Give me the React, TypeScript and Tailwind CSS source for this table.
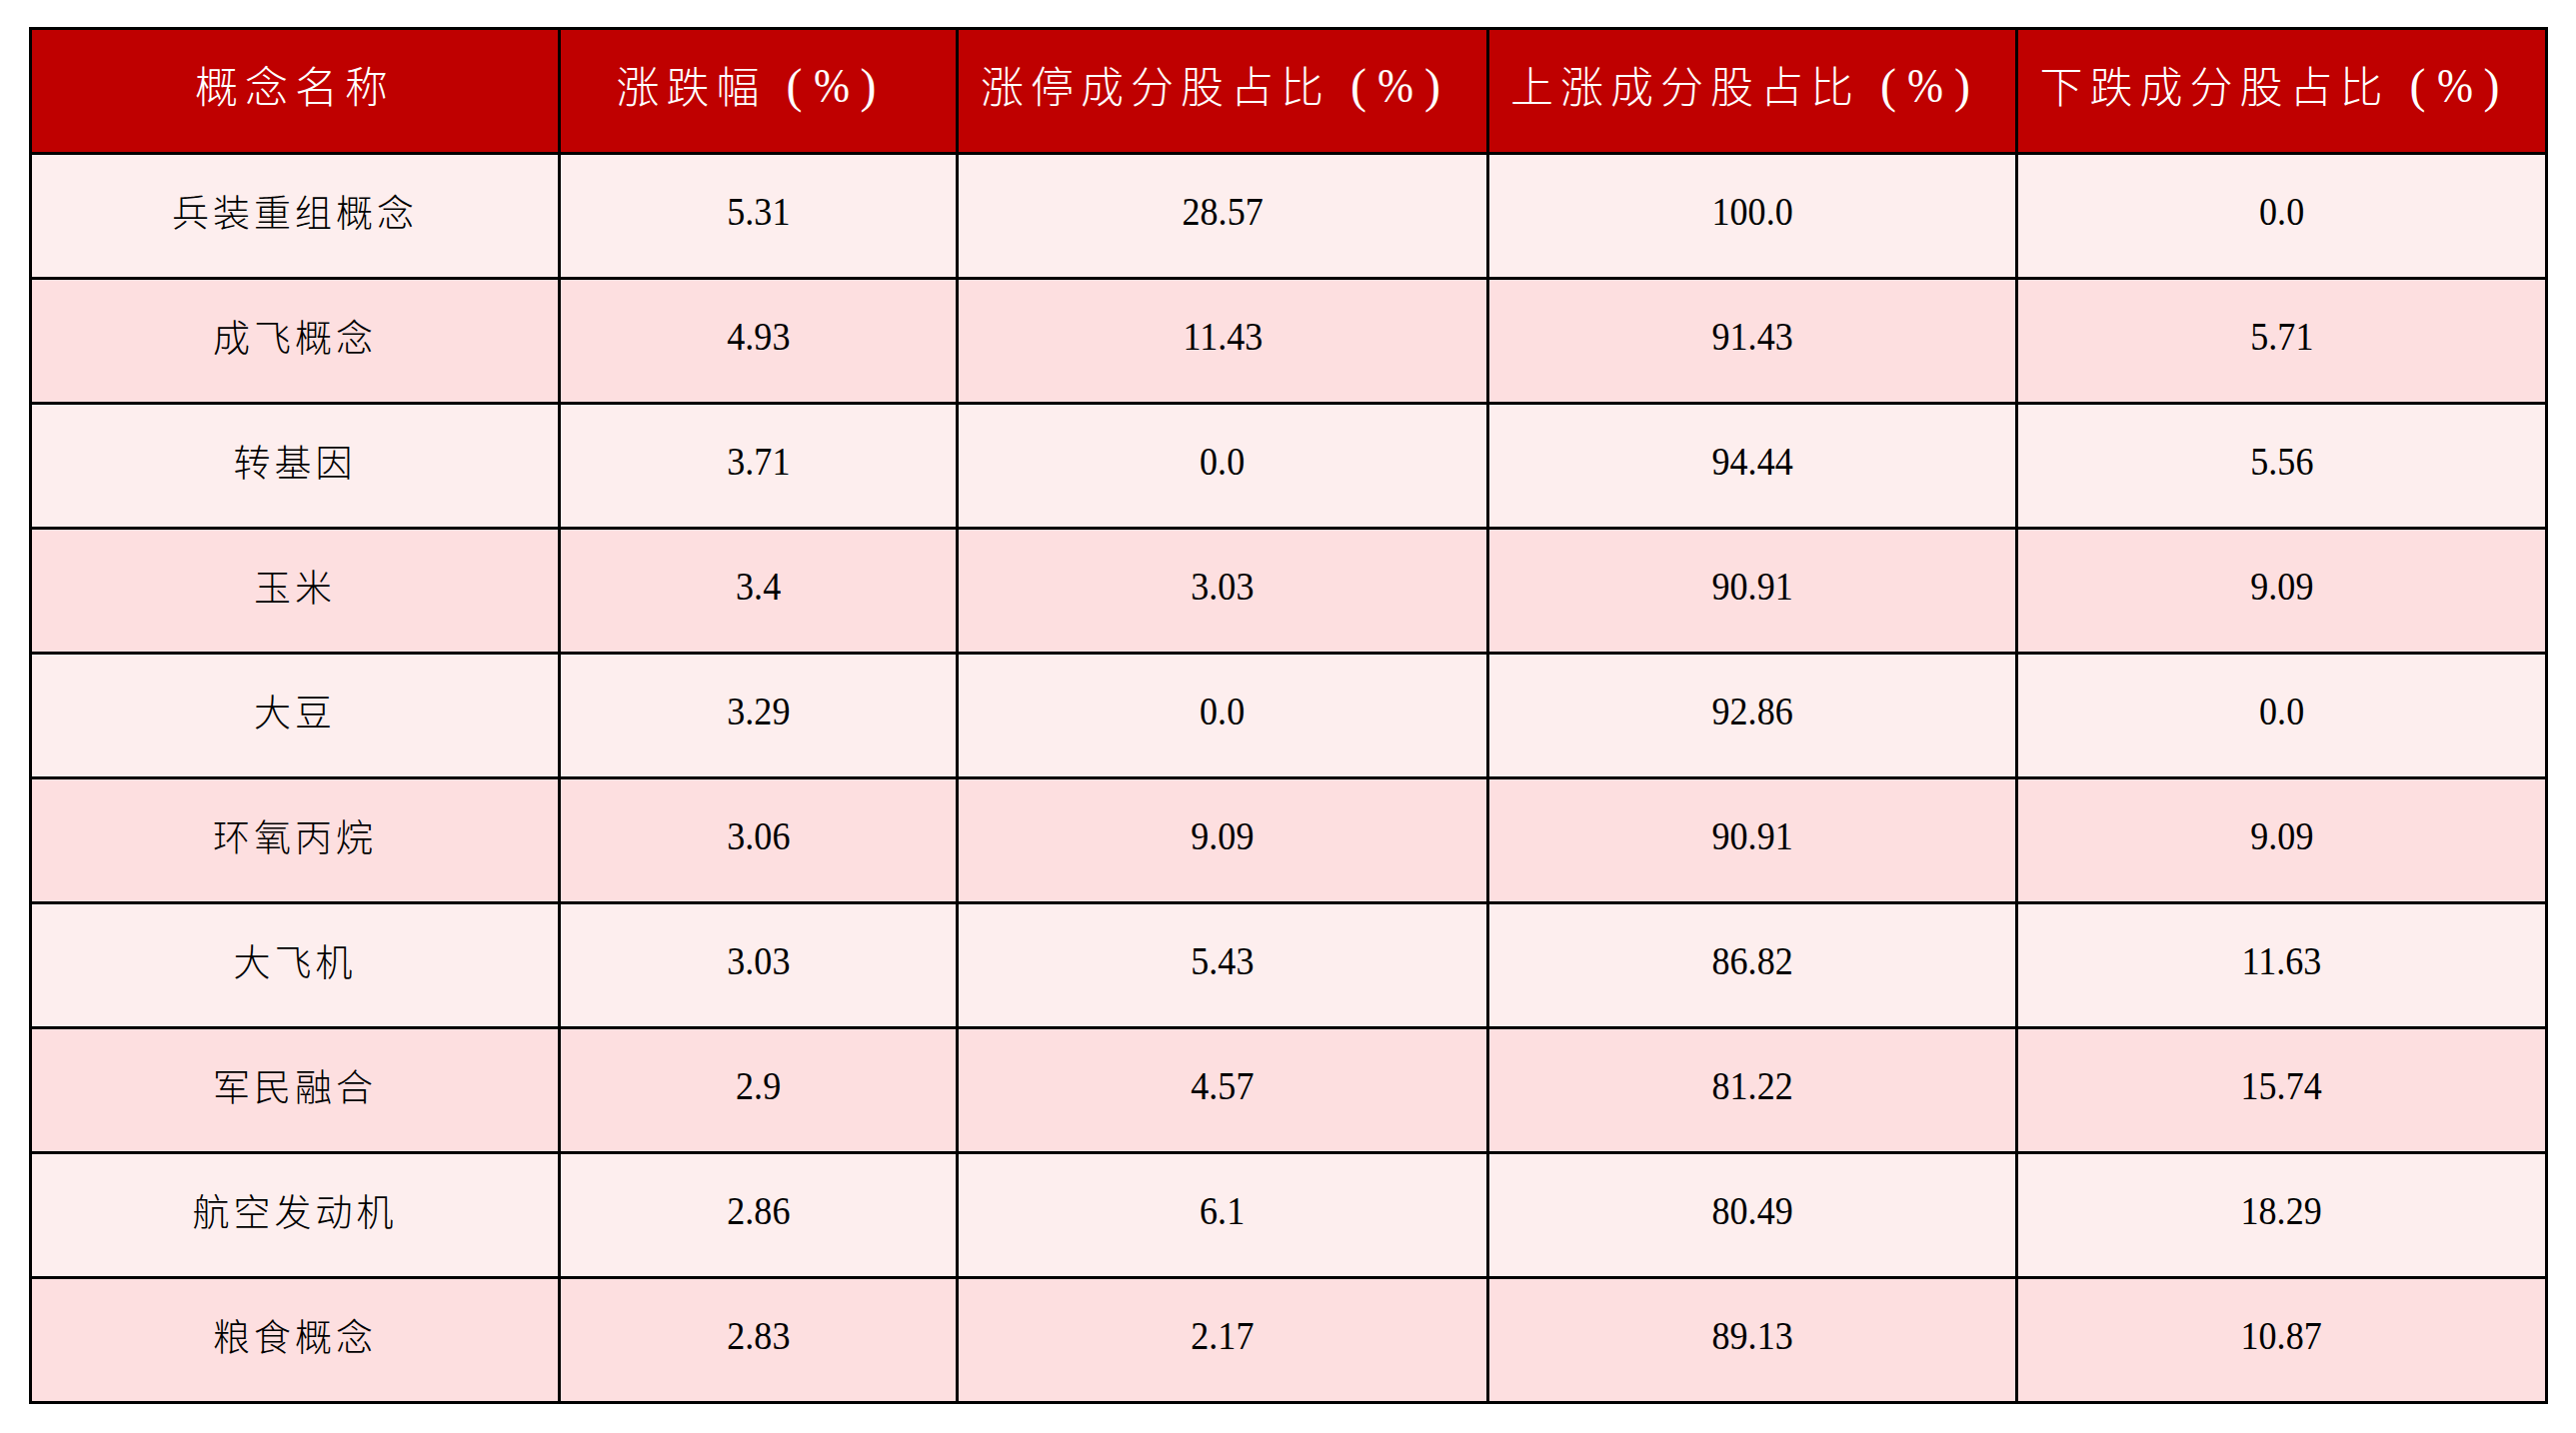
const headers = ['概念名称', '涨跌幅（%）', '涨停成分股占比（%）', '上涨成分股占比（%）', '下跌成分股占比（%）'];

const rows: [string, string, string, string, string][] = [
  ['兵装重组概念', '5.31', '28.57', '100.0', '0.0'],
  ['成飞概念', '4.93', '11.43', '91.43', '5.71'],
  ['转基因', '3.71', '0.0', '94.44', '5.56'],
  ['玉米', '3.4', '3.03', '90.91', '9.09'],
  ['大豆', '3.29', '0.0', '92.86', '0.0'],
  ['环氧丙烷', '3.06', '9.09', '90.91', '9.09'],
  ['大飞机', '3.03', '5.43', '86.82', '11.63'],
  ['军民融合', '2.9', '4.57', '81.22', '15.74'],
  ['航空发动机', '2.86', '6.1', '80.49', '18.29'],
  ['粮食概念', '2.83', '2.17', '89.13', '10.87'],
];

const cjk = "font-['Noto_Sans_CJK_SC',sans-serif]";
const num = "font-['Liberation_Serif',serif]";

function HeaderCell({ text }: { text: string }) {
  // CJK label, then the "(%)" unit drawn in the serif face
  const i = text.indexOf('（');
  const main = i >= 0 ? text.slice(0, i) : text;
  const hasUnit = i >= 0;
  return (
    <div className="bg-[#bf0000] text-white flex items-center justify-center pb-[14px]">
      <span className={`${cjk} text-[43px] tracking-[7px] font-light leading-none`}>{main}</span>
      {hasUnit && (
        <span className={`${num} inline-flex items-center gap-[9px] text-[48px] leading-none ml-[20px] mr-[24px] mt-[4px]`}>
          <span>(</span>
          <span className="inline-block scale-x-[0.9]">%</span>
          <span>)</span>
        </span>
      )}
    </div>
  );
}

export default function App() {
  return (
    <div className="min-h-screen w-full bg-white pl-[29px] pt-[27px]">
      <div className="grid w-[2520px] grid-cols-[526px_395px_528px_526px_527px] auto-rows-[122px] gap-[3px] bg-black p-[3px]">
        {headers.map((h) => (
          <HeaderCell key={h} text={h} />
        ))}
        {rows.map((r, ri) => {
          const bg = ri % 2 === 0 ? 'bg-[#fdeeee]' : 'bg-[#fddfe0]';
          return r.map((cell, ci) => (
            <div key={`${ri}-${ci}`} className={`${bg} flex items-center justify-center text-black pb-[9px]`}>
              {ci === 0 ? (
                <span className={`${cjk} text-[37px] tracking-[4px] font-light leading-none`}>{cell}</span>
              ) : (
                <span className={`${num} inline-block text-[41px] leading-none scale-x-[0.88]`}>{cell}</span>
              )}
            </div>
          ));
        })}
      </div>
    </div>
  );
}
